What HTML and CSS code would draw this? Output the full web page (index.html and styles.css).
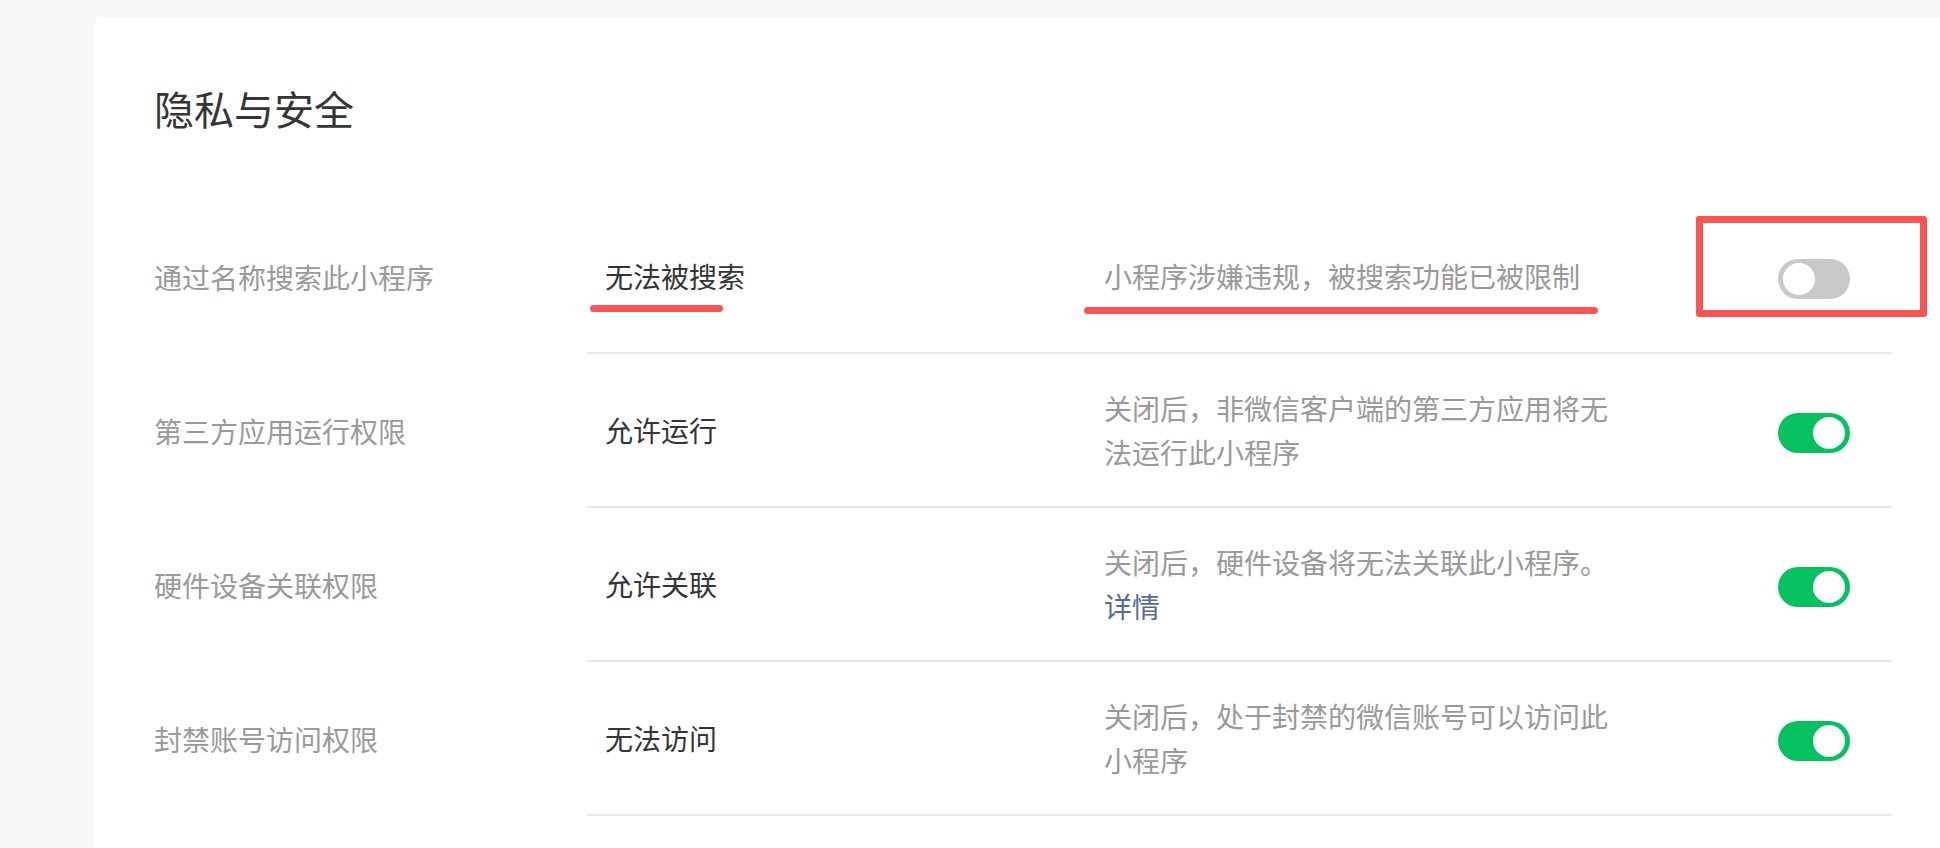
FILE: index.html
```html
<!DOCTYPE html>
<html lang="zh-CN">
<head>
<meta charset="utf-8">
<title>隐私与安全</title>
<link rel="stylesheet" href="styles.css">
</head>
<body>
<div class="page">
  <div class="card">
    <h2 class="title">隐私与安全</h2>
    <div class="rows">
      <div class="row">
        <div class="label">通过名称搜索此小程序</div>
        <div class="content">
          <div class="value">无法被搜索</div>
          <div class="desc">小程序涉嫌违规，被搜索功能已被限制</div>
          <div class="switch off"><span class="knob"></span></div>
        </div>
      </div>
      <div class="row">
        <div class="label">第三方应用运行权限</div>
        <div class="content">
          <div class="value">允许运行</div>
          <div class="desc">关闭后，非微信客户端的第三方应用将无法运行此小程序</div>
          <div class="switch on"><span class="knob"></span></div>
        </div>
      </div>
      <div class="row">
        <div class="label">硬件设备关联权限</div>
        <div class="content">
          <div class="value">允许关联</div>
          <div class="desc">关闭后，硬件设备将无法关联此小程序。<br><a class="link">详情</a></div>
          <div class="switch on"><span class="knob"></span></div>
        </div>
      </div>
      <div class="row">
        <div class="label">封禁账号访问权限</div>
        <div class="content">
          <div class="value">无法访问</div>
          <div class="desc">关闭后，处于封禁的微信账号可以访问此小程序</div>
          <div class="switch on"><span class="knob"></span></div>
        </div>
      </div>
    </div>
  </div>
  <div class="mark underline-a"></div>
  <div class="mark underline-b"></div>
  <div class="mark box-a"></div>
</div>
</body>
</html>
```
FILE: styles.css
```css
html, body {
  margin: 0;
  padding: 0;
  height: 100%;
  overflow: hidden;
  background: #f6f7f9;
  font-family: "Noto Sans CJK SC", "Noto Sans", sans-serif;
}

.page {
  position: relative;
  padding: 17px 0 0 94px;
  height: 100%;
  box-sizing: border-box;
}

.card {
  width: 1846px;
  height: 831px;
  background: #ffffff;
  border-radius: 8px 0 0 0;
  box-shadow: 0 0 3px rgba(0, 0, 0, 0.03);
  padding: 63px 0 0 60px;
  box-sizing: border-box;
}

.title {
  margin: 0;
  font-size: 40px;
  line-height: 56px;
  font-weight: 400;
  color: #353535;
}

.rows {
  margin-top: 64px;
}

.row {
  display: flex;
  height: 154px;
  font-size: 28px;
}

.label {
  width: 433px;
  flex: 0 0 433px;
  align-self: center;
  color: #9a9a9a;
  line-height: 44px;
}

.content {
  flex: 0 0 1304px;
  display: flex;
  align-items: center;
  border-bottom: 2px solid #e8e8ec;
  padding-left: 18px;
  box-sizing: border-box;
}

.value {
  width: 499px;
  flex: 0 0 499px;
  color: #353535;
  line-height: 44px;
}

.desc {
  width: 510px;
  flex: 0 0 510px;
  color: #9a9a9a;
  line-height: 44px;
}

.link {
  color: #576b95;
  text-decoration: none;
}

.switch {
  position: relative;
  margin-left: auto;
  margin-right: 41px;
  margin-top: 6px;
  width: 72px;
  height: 40px;
  border-radius: 20px;
  flex: 0 0 72px;
}

.switch.on {
  background: #07c160;
}

.switch.off {
  background: #c9c9c9;
}

.knob {
  position: absolute;
  top: 4px;
  width: 32px;
  height: 32px;
  border-radius: 50%;
  background: #ffffff;
}

.switch.on .knob {
  right: 5px;
}

.switch.off .knob {
  left: 5px;
}

.mark {
  position: absolute;
}

.underline-a {
  left: 590px;
  top: 305px;
  width: 133px;
  height: 7px;
  border-radius: 4px;
  background: #fb5454;
}

.underline-b {
  left: 1084px;
  top: 307px;
  width: 514px;
  height: 7px;
  border-radius: 4px;
  background: #fb5454;
}

.box-a {
  left: 1696px;
  top: 216px;
  width: 231px;
  height: 101px;
  border: 7px solid #fb5454;
  border-radius: 3px;
  box-sizing: border-box;
}
```
